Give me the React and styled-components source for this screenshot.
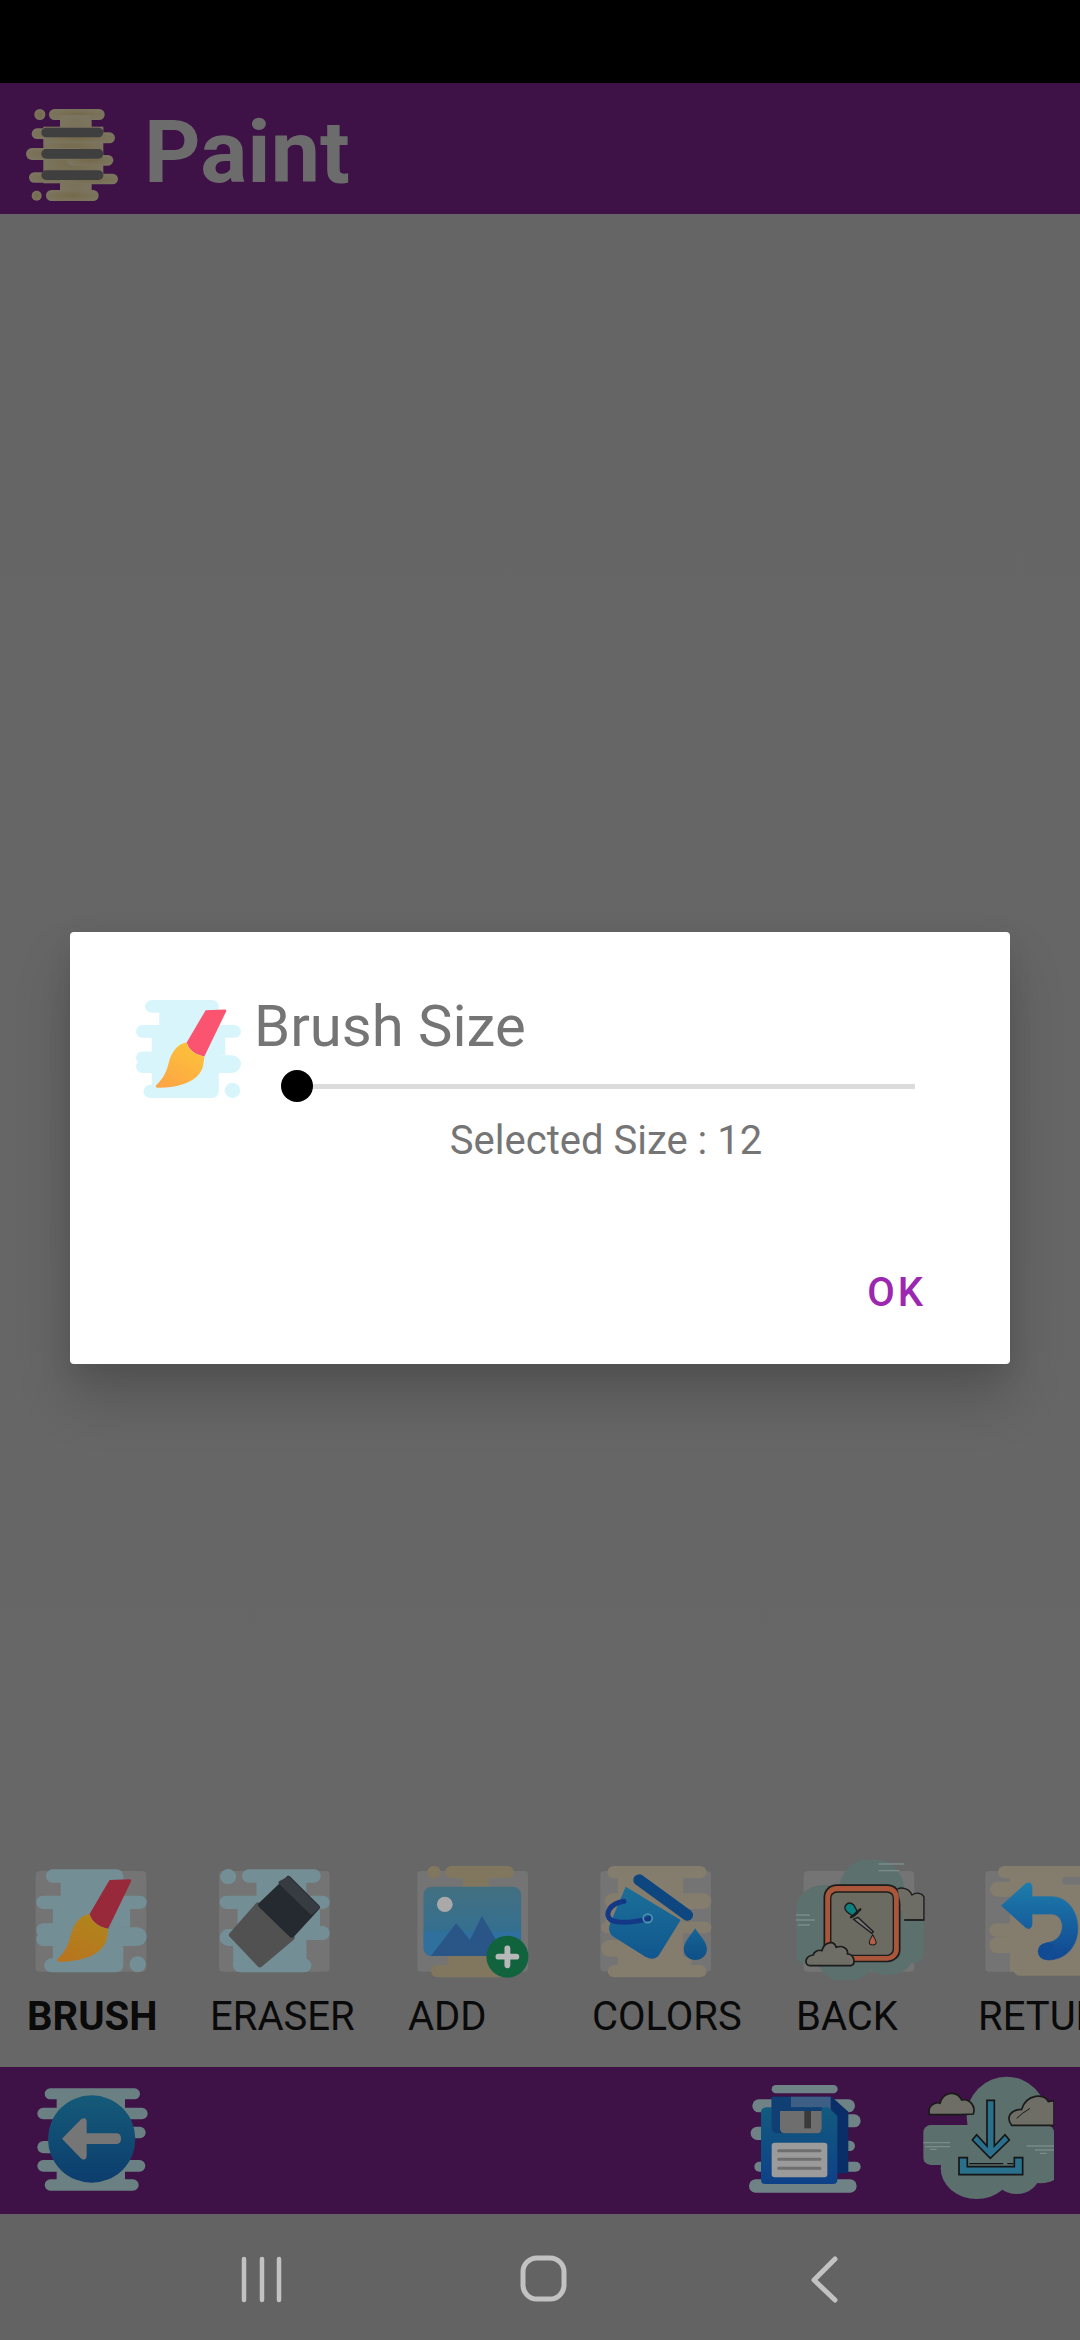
import React from 'react';
import styled, { createGlobalStyle } from 'styled-components';

const Global = createGlobalStyle`
  html, body { margin: 0; padding: 0; background: #666; }
  #root { width: 1080px; height: 2340px; }
  * { box-sizing: border-box; }
`;
const Screen = styled.div`
  position: relative; width: 1080px; height: 2340px; display: flex; flex-direction: column;
  overflow: hidden; background: #666; font-family: Roboto, "Liberation Sans", sans-serif;
`;
const StatusBar = styled.div`height: 83px; background: #000; flex: none;`;
const Header = styled.header`
  height: 131px; flex: none; background: #3e1147; display: flex; align-items: center;
  padding: 6px 0 0 26px; gap: 26px;
`;
const Logo = styled.svg`width: 92px; height: 92px; margin-top: 7px; flex: none;`;
const AppTitle = styled.h1`margin: 0; font-size: 88px; font-weight: 700; color: #6c6c6c;`;
const Canvas = styled.main`flex: 1; background: linear-gradient(#656565, #676767);`;
const Toolbar = styled.nav`
  flex: none; height: 207px; display: flex; padding-left: 27px; overflow: hidden; background: #676767;
`;
const Tool = styled.div`flex: none; width: ${p => p.$w}px; display: flex; flex-direction: column;`;
const ToolIcon = styled.svg`width: 130px; height: 120px; flex: none; overflow: hidden;`;
const ToolLabel = styled.span`
  margin-top: 13px; font-size: 40px; white-space: nowrap; color: #0a0a0a;
  font-weight: ${p => (p.$active ? 700 : 400)};
`;
const BottomBar = styled.div`
  flex: none; height: 147px; background: #3e1147; display: flex; justify-content: space-between;
`;
const BarArt = styled.svg`height: 146px; width: ${p => p.$w}px; flex: none;`;
const NavBar = styled.div`
  flex: none; height: 126px; background: #636363; display: flex; justify-content: center;
  align-items: flex-start; padding: 41px 0 0 6px;
`;
const NavSlot = styled.div`width: 281px; display: flex; justify-content: center;`;
const NavIcon = styled.svg`width: 50px; height: 50px; flex: none;`;
const Layer = styled.div`
  position: absolute; inset: 83px 0 127px 0; display: flex; align-items: center; justify-content: center;
`;
const Dialog = styled.section`
  width: 940px; height: 432px; background: #fff; border-radius: 4px; display: flex; flex-direction: column;
  box-shadow: 0 34px 56px rgba(0, 0, 0, 0.18), 0 8px 24px rgba(0, 0, 0, 0.08);
`;
const DialogBody = styled.div`display: flex; padding: 60px 52px 0 66px; gap: 13px;`;
const DialogIcon = styled.svg`width: 105px; height: 98px; margin-top: 8px; flex: none;`;
const DialogColumn = styled.div`flex: 1; display: flex; flex-direction: column;`;
const DialogTitle = styled.h2`margin: 0; font-size: 58px; font-weight: 400; color: #757575;`;
const Slider = styled.div`
  width: 634px; height: 40px; margin: 6px 0 0 27px; display: flex; align-items: center;
`;
const Thumb = styled.div`width: 32px; height: 32px; border-radius: 50%; background: #000; flex: none;`;
const Track = styled.div`flex: 1; height: 5px; background: #dcdcdc;`;
const SizeText = styled.p`margin: 11px 0 0; text-align: center; font-size: 40px; color: #757575;`;
const DialogFooter = styled.div`display: flex; justify-content: flex-end; padding: 105px 84px 0 0;`;
const OkButton = styled.button`
  border: 0; padding: 0; background: none; font: 500 40px Roboto, sans-serif; letter-spacing: 3px; color: #9c27b0;
`;

const Pills = ({ items, fill }) => (
  <g fill={fill}>
    {items.map(([x1, y1, x2, y2, rx], i) => (
      <rect key={i} x={x1} y={y1} width={x2 - x1} height={y2 - y1} rx={rx ?? (y2 - y1) / 2} />
    ))}
  </g>
);
const Backdrop = ({ x, w = 322 }) => <rect x={x} y={93} width={w} height={302} rx={12} fill="#747474" />;

const brushBlob = [
  [135, 88, 360, 128], [178, 110, 360, 375, 0], [155, 185, 380, 262, 0], [107, 167, 300, 207], [200, 167, 428, 207],
  [107, 250, 250, 290], [107, 278, 300, 318], [200, 262, 428, 318], [155, 290, 320, 375, 0],
  [130, 355, 360, 397], [378, 349, 426, 397],
];
const BrushShapes = ({ blob, handle, head, id }) => (
  <>
    <Pills items={brushBlob} fill={blob} />
    <path d="M320 120 L378 118 Q385 118 382 125 L316 266 C290 262 268 246 262 222 Z" fill={handle} />
    <path d="M262 222 C235 226 215 250 206 290 C198 325 182 345 167 358 L170 365 C240 365 300 345 312 296 L316 266 C290 262 268 246 262 222 Z" fill={`url(#${id})`} />
    <defs>
      <linearGradient id={id} x1="0.7" y1="0" x2="0.2" y2="1">
        <stop offset="0" stopColor={head[0]} />
        <stop offset="1" stopColor={head[1]} />
      </linearGradient>
    </defs>
  </>
);

const Grad = ({ id, a, b }) => (
  <linearGradient id={id} x1="0" y1="0" x2="0" y2="1">
    <stop offset="0" stopColor={a} />
    <stop offset="1" stopColor={b} />
  </linearGradient>
);

const BrushTool = () => (
  <ToolIcon viewBox="80 60 378 360" preserveAspectRatio="none">
    <Backdrop x={105} />
    <BrushShapes blob="#748e96" handle="#98293a" head={['#b0851c', '#b8741e']} id="brA" />
  </ToolIcon>
);
const EraserTool = () => (
  <ToolIcon viewBox="610 60 378 360" preserveAspectRatio="none">
    <Backdrop x={636} />
    <Pills fill="#748e96" items={[
      [640, 87, 686, 133], [703, 88, 932, 128], [745, 100, 890, 375, 0], [638, 167, 800, 207], [800, 167, 958, 207],
      [690, 190, 930, 262, 0], [638, 267, 760, 318], [800, 258, 958, 300], [677, 290, 890, 375, 0], [677, 355, 905, 397],
    ]} />
    <g strokeLinejoin="round" strokeWidth="16">
      <path d="M750 195 L848 293 L755 374 L673 285 Z" fill="#515151" stroke="#515151" />
      <path d="M838 116 L922 202 L848 285 L758 195 Z" fill="#252a30" stroke="#252a30" />
      <path d="M838 116 L922 202 L905 218 L815 128 Z" fill="#373c43" stroke="#373c43" strokeWidth="12" />
    </g>
  </ToolIcon>
);
const AddTool = () => (
  <ToolIcon viewBox="1185 60 378 360" preserveAspectRatio="none">
    <Backdrop x={1212} />
    <Pills fill="#81775f" items={[
      [1241, 77, 1280, 116], [1293, 78, 1493, 115], [1345, 100, 1420, 160, 0], [1252, 375, 1470, 412], [1300, 340, 1460, 395, 0],
    ]} />
    <defs>
      <Grad id="ph" a="#437080" b="#2c6f99" />
      <clipPath id="phc"><rect x="1230" y="140" width="284" height="208" rx="24" /></clipPath>
    </defs>
    <rect x="1230" y="140" width="284" height="208" rx="24" fill="url(#ph)" />
    <g clipPath="url(#phc)">
      <rect x="1230" y="275" width="284" height="75" fill="#2f709f" />
      <path d="M1250 350 L1325 250 L1365 300 L1400 228 L1470 350 Z" fill="#2a5587" />
    </g>
    <circle cx="1292" cy="193" r="23" fill="#a9a9a9" />
    <ellipse cx="1474" cy="350" rx="61" ry="63" fill="#11633e" />
    <path d="M1474 325 V376 M1448 350 H1500" stroke="#b8b8b8" strokeWidth="17" strokeLinecap="round" />
  </ToolIcon>
);
const ColorsTool = () => (
  <ToolIcon viewBox="150 60 378 360" preserveAspectRatio="none">
    <Backdrop x={174} />
    <defs>
      <Grad id="bk" a="#1c6f98" b="#10578f" />
      <Grad id="dr" a="#186497" b="#0f4f85" />
    </defs>
    <Pills fill="#847d6e" items={[
      [195, 78, 483, 115], [225, 100, 415, 395, 0], [187, 160, 497, 207], [176, 245, 497, 280],
      [176, 300, 400, 350], [250, 350, 440, 385, 0], [415, 245, 497, 280], [196, 375, 483, 412],
      [190, 200, 300, 250, 0],
    ]} />
    <path d="M248 140 L408 240 L345 345 Q330 365 305 350 L215 292 Q192 278 203 250 Z" fill="url(#bk)" />
    <path d="M287 120 L427 225" stroke="#0e4680" strokeWidth="34" strokeLinecap="round" />
    <path d="M243 184 C200 190 185 225 205 240 C230 252 280 245 318 235" fill="none" stroke="#133886" strokeWidth="15" strokeLinecap="round" />
    <circle cx="312" cy="235" r="13" fill="none" stroke="#4f93ad" strokeWidth="5" />
    <path d="M450 265 C435 290 417 305 417 328 C417 348 432 360 450 360 C468 360 484 348 484 328 C484 305 465 290 450 265 Z" fill="url(#dr)" />
  </ToolIcon>
);
const BackTool = () => (
  <ToolIcon viewBox="745 60 378 360" preserveAspectRatio="none">
    <Backdrop x={767} />
    <g fill="#5c716e">
      <ellipse cx="965" cy="150" rx="95" ry="95" />
      <ellipse cx="825" cy="225" rx="87" ry="90" />
      <rect x="740" y="210" width="377" height="160" rx="30" />
      <ellipse cx="890" cy="350" rx="85" ry="75" />
      <ellipse cx="1010" cy="350" rx="75" ry="55" />
    </g>
    <path d="M985 72 H1060 M985 92 H1045 M740 225 H785 M740 240 H800 M750 255 H785" stroke="#7b8c89" strokeWidth="4" />
    <rect x="825" y="133" width="224" height="234" rx="38" fill="#1c1c1c" />
    <rect x="830" y="138" width="214" height="224" rx="34" fill="#a9563a" />
    <rect x="844" y="154" width="186" height="194" rx="20" fill="#1c1c1c" />
    <rect x="848" y="158" width="178" height="186" rx="17" fill="#6b6b62" />
    <path d="M1040 148 C1050 140 1075 145 1082 165 C1095 155 1112 160 1117 170 V240 H1060" fill="#6d6d65" stroke="#1c1c1c" strokeWidth="4" />
    <path d="M1060 240 H1117" stroke="#1c1c1c" strokeWidth="4" />
    <path d="M925 232 L970 275 L965 280 L912 238 Z" fill="#777" stroke="#1c1c1c" strokeWidth="4" strokeLinejoin="round" />
    <path d="M890 195 Q900 183 913 195 L925 218 L912 230 L893 215 Q883 205 890 195 Z" fill="#0d7f80" stroke="#1c1c1c" strokeWidth="4" />
    <path d="M905 232 L932 208" stroke="#1c1c1c" strokeWidth="7" strokeLinecap="round" />
    <path d="M968 284 C962 296 958 302 958 306 C958 318 978 318 978 306 C978 302 974 296 968 284 Z" fill="#b55e48" stroke="#1c1c1c" strokeWidth="3" />
    <path d="M785 377 C768 375 770 348 795 345 C798 335 810 328 820 332 C828 305 855 300 862 322 C880 315 897 325 895 342 C912 342 922 370 905 377 Z" fill="#6e6e66" stroke="#1c1c1c" strokeWidth="5" />
  </ToolIcon>
);
const ReturnTool = () => (
  <ToolIcon viewBox="1277 60 378 360" preserveAspectRatio="none">
    <Backdrop x={1298} w={400} />
    <defs><Grad id="rt" a="#1d7dab" b="#114792" /></defs>
    <Pills fill="#847d6e" items={[
      [1335, 78, 1700, 115], [1370, 100, 1700, 395, 0], [1312, 125, 1500, 170], [1310, 250, 1500, 290],
      [1310, 290, 1450, 340], [1380, 370, 1700, 407],
    ]} />
    <rect x="1522" y="110" width="60" height="24" rx="12" fill="#747474" />
    <path d="M1345 197 L1415 132 Q1432 122 1434 140 V170 H1490 C1590 170 1600 360 1478 360 L1476 308 C1535 305 1535 222 1490 222 H1434 V255 Q1430 272 1415 262 Z" fill="url(#rt)" stroke="url(#rt)" strokeLinejoin="round" strokeWidth="2" />
    <circle cx="1477" cy="334" r="26" fill="#114b94" />
  </ToolIcon>
);

const tools = [
  { label: 'BRUSH', w: 183, Icon: BrushTool, active: true },
  { label: 'ERASER', w: 198, Icon: EraserTool },
  { label: 'ADD', w: 184, Icon: AddTool },
  { label: 'COLORS', w: 204, Icon: ColorsTool },
  { label: 'BACK', w: 182, Icon: BackTool },
  { label: 'RETURN', w: 182, Icon: ReturnTool },
];

export default function App() {
  return (
    <Screen>
      <Global />
      <StatusBar />
      <Header>
        <Logo viewBox="78 147 276 276">
          <defs>
            <radialGradient id="lg"><stop offset="0" stopColor="#75694a" /><stop offset="1" stopColor="#7b745e" /></radialGradient>
          </defs>
          <Pills fill="url(#lg)" items={[
            [103, 147, 136, 180], [147, 147, 314, 180], [180, 165, 275, 405, 0], [130, 200, 310, 370, 0], [95, 205, 250, 237], [130, 217, 345, 250],
            [78, 264, 250, 300], [200, 285, 340, 317], [87, 337, 250, 368], [180, 341, 354, 373], [95, 392, 125, 422], [138, 390, 296, 423],
          ]} />
          <Pills fill="#3f3f3f" items={[[124, 203, 310, 232], [124, 267, 310, 296], [124, 331, 310, 360]]} />
        </Logo>
        <AppTitle>Paint</AppTitle>
      </Header>
      <Canvas />
      <Toolbar>
        {tools.map(({ label, w, Icon, active }) => (
          <Tool key={label} $w={w}>
            <Icon />
            <ToolLabel $active={active}>{label}</ToolLabel>
          </Tool>
        ))}
      </Toolbar>
      <BottomBar>
        <BarArt $w={180} viewBox="0 21 540 438">
          <defs><Grad id="bc" a="#155a78" b="#0c3d6e" /></defs>
          <Pills fill="#6b8082" items={[
            [134, 85, 420, 118], [112, 143, 443, 178], [300, 200, 437, 235], [112, 243, 200, 280], [112, 300, 436, 335], [134, 358, 416, 392],
            [170, 100, 375, 375, 0],
          ]} />
          <circle cx="275" cy="237" r="131" fill="url(#bc)" />
          <path d="M186 236 L244 177 Q259 170 260 185 V220 H348 Q363 220 363 236 Q363 252 348 252 H260 V288 Q258 304 244 296 Z" fill="#767676" />
        </BarArt>
        <BarArt $w={360} viewBox="0 51 1080 438">
          <defs>
            <Grad id="fl" a="#125a7e" b="#0e4188" />
            <clipPath id="dlc"><rect x="560" y="51" width="442" height="438" /></clipPath>
          </defs>
          <Pills fill="#6f8387" items={[
            [155, 105, 353, 130], [97, 148, 405, 187], [300, 193, 422, 232], [92, 230, 200, 270], [300, 272, 405, 303],
            [103, 335, 422, 365], [87, 388, 410, 428],
          ]} />
          <path d="M155 140 H335 L385 185 V370 H155 Z" fill="#0a2f68" />
          <rect x="212" y="140" width="120" height="40" fill="#3d5f85" />
          <path d="M140 172 H325 L352 198 V390 Q352 402 340 402 H135 Q123 402 123 390 V188 Q123 172 140 172 Z" fill="url(#fl)" />
          <path d="M155 140 H210 V172 H305 V235 Q305 250 290 250 H175 Q155 250 155 230 Z" fill="#103f74" />
          <path d="M180 183 H305 V235 Q305 250 290 250 H195 Q180 250 180 235 Z" fill="#6e6e6e" />
          <rect x="253" y="183" width="20" height="52" fill="#3a3a3a" />
          <rect x="155" y="278" width="167" height="104" rx="9" fill="#9b9b9b" />
          <path d="M176 302 H300 M176 328 H300 M176 355 H300" stroke="#6e6e6e" strokeWidth="9" strokeLinecap="round" />
          <g clipPath="url(#dlc)">
            <g fill="#5b6f6c">
              <ellipse cx="860" cy="200" rx="120" ry="120" />
              <ellipse cx="770" cy="355" rx="108" ry="92" />
              <ellipse cx="890" cy="370" rx="70" ry="62" />
              <rect x="610" y="225" width="392" height="120" rx="22" />
              <ellipse cx="960" cy="350" rx="70" ry="50" />
            </g>
            <path d="M610 278 H690 M615 290 H690 M630 298 H650 M920 288 H1002 M945 300 H1002 M960 310 H980" stroke="#7a8b88" strokeWidth="4" />
            <path d="M628 190 C622 165 650 155 660 160 C670 125 710 120 725 150 C750 145 768 170 760 192 L720 194 H628 Z" fill="#6e6e66" stroke="#1a1a1a" strokeWidth="5" />
            <path d="M875 226 C855 200 875 178 905 178 C920 130 975 130 985 155 L1002 152 V226 Z" fill="#6e6e66" stroke="#1a1a1a" strokeWidth="5" />
            <path d="M890 205 Q905 190 930 175" fill="none" stroke="#1a1a1a" strokeWidth="3" />
            <path d="M801 151 H823 V288 L855 254 L868 270 L811 325 L757 270 L770 254 L801 288 Z" fill="#2a708c" stroke="#151515" strokeWidth="5" strokeLinejoin="miter" />
            <path d="M717 323 H742 V350 H883 V323 H908 V374 H717 Z" fill="#2a708c" stroke="#151515" strokeWidth="5" />
            <path d="M748 341 H850 M862 341 H880" stroke="#151515" strokeWidth="4" />
          </g>
        </BarArt>
      </BottomBar>
      <NavBar>
        <NavSlot>
          <NavIcon viewBox="0 0 50 50">
            <path d="M7 4 V45 M25 4 V45 M42 4 V45" stroke="#c2c2c2" strokeWidth="4.5" strokeLinecap="round" />
          </NavIcon>
        </NavSlot>
        <NavSlot>
          <NavIcon viewBox="0 0 50 50">
            <rect x="5" y="3" width="41" height="41" rx="14" fill="none" stroke="#c2c2c2" strokeWidth="5" />
          </NavIcon>
        </NavSlot>
        <NavSlot>
          <NavIcon viewBox="0 0 50 50">
            <path d="M36 4 L15 25 L36 45" fill="none" stroke="#c2c2c2" strokeWidth="5" strokeLinecap="round" strokeLinejoin="round" />
          </NavIcon>
        </NavSlot>
      </NavBar>
      <Layer>
        <Dialog>
          <DialogBody>
            <DialogIcon viewBox="107 88 321 309" preserveAspectRatio="none">
              <BrushShapes blob="#d9f5fc" handle="#fb5470" head={['#fdc23a', '#fda544']} id="brB" />
            </DialogIcon>
            <DialogColumn>
              <DialogTitle>Brush Size</DialogTitle>
              <Slider><Thumb /><Track /></Slider>
              <SizeText>Selected Size : 12</SizeText>
            </DialogColumn>
          </DialogBody>
          <DialogFooter><OkButton>OK</OkButton></DialogFooter>
        </Dialog>
      </Layer>
    </Screen>
  );
}
